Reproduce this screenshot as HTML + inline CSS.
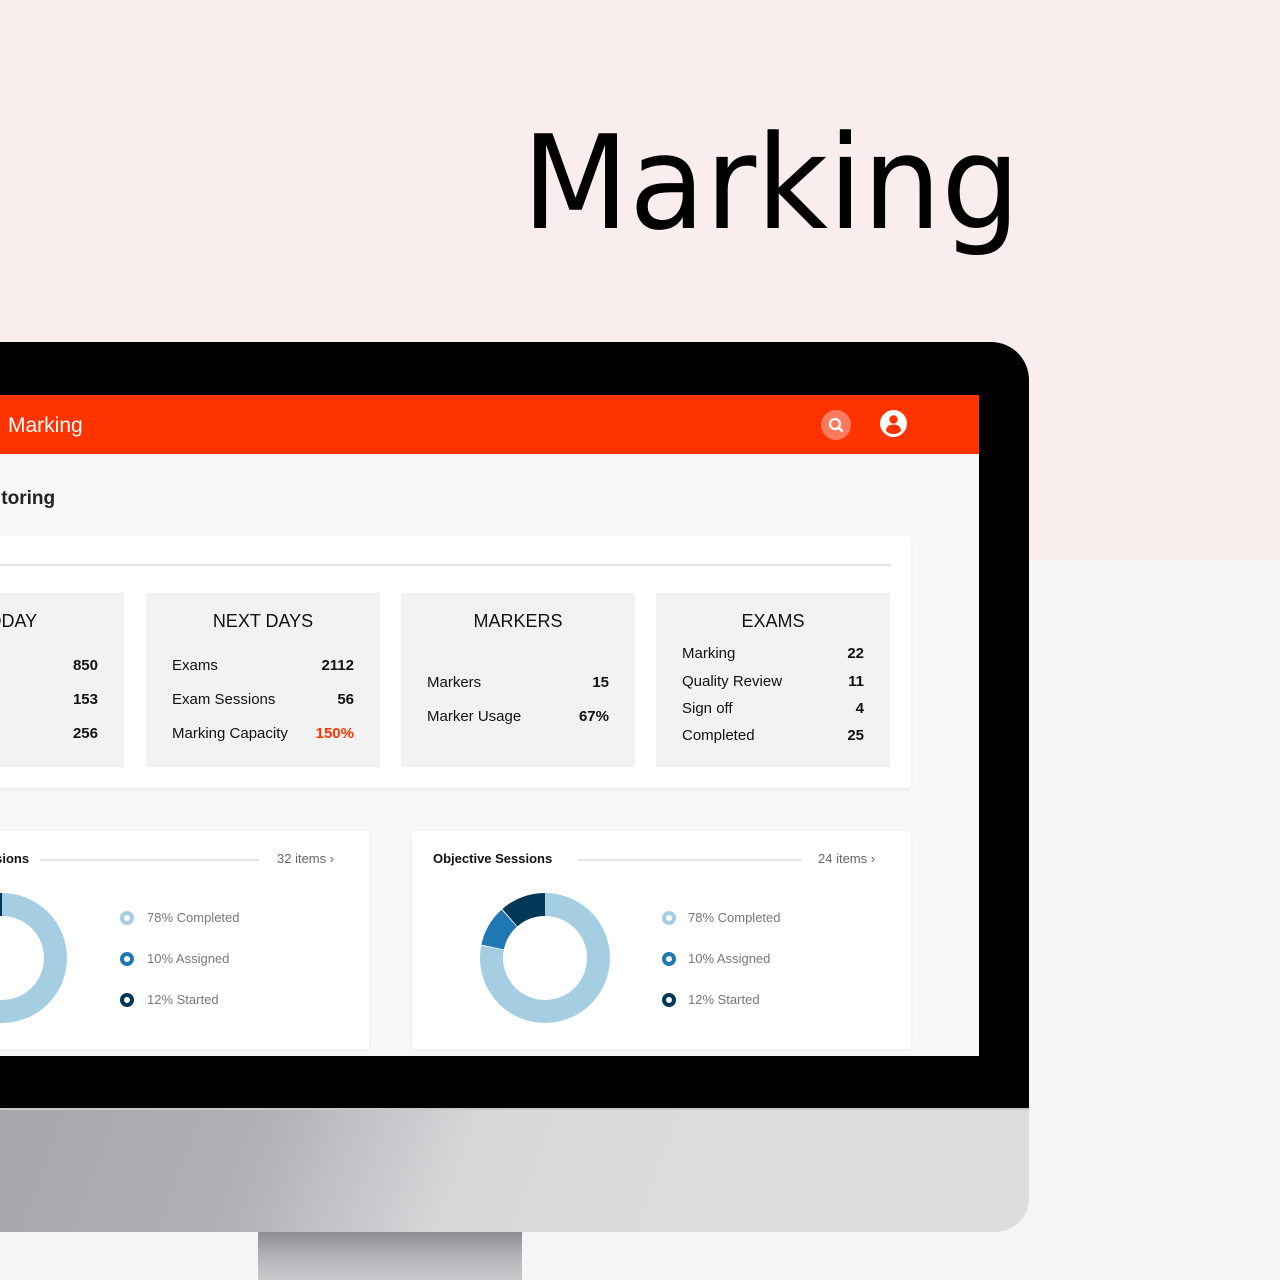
<!DOCTYPE html>
<html><head><meta charset="utf-8"><style>
*{margin:0;padding:0;box-sizing:border-box}
body{width:1280px;height:1280px;position:relative;overflow:hidden;background:#f5f5f5;font-family:"Liberation Sans","DejaVu Sans",sans-serif}
.bgtop{position:absolute;left:0;top:0;width:1280px;height:560px;background:#f9eded}
.title{position:absolute;left:522px;top:103px;font-size:130px;line-height:160px;color:#000;font-family:"DejaVu Sans","Liberation Sans",sans-serif;font-weight:normal;transform:scaleX(0.955);transform-origin:left;white-space:nowrap}
.bezel{position:absolute;left:-40px;top:342px;width:1069px;height:766px;background:#000;border-top-right-radius:38px}
.chin{position:absolute;left:0;top:1108px;width:1029px;height:124px;border-bottom-right-radius:34px;background:linear-gradient(110deg,#a6a7aa 0%,#b0b1b4 25%,#d6d7d9 45%,#dcdddf 70%,#dcdddf 100%);border-top:2px solid #c8c8c8}
.stand{position:absolute;left:258px;top:1232px;width:264px;height:48px;background:linear-gradient(180deg,#8d8e91,#b9babd 60%,#c7c8ca)}
.screen{position:absolute;left:0;top:395px;width:979px;height:661px;background:#f7f7f7;overflow:hidden}
.hdr{position:absolute;left:0;top:0;width:979px;height:59px;background:#ff3300}
.hdr .t{position:absolute;left:8px;top:19px;color:#fff;font-size:21px}
.srch{position:absolute;left:821px;top:15px;width:30px;height:30px;border-radius:50%;background:#ff7a5c}
.user{position:absolute;left:880px;top:15px;width:27px;height:27px;border-radius:50%;background:#fff}
.sub{position:absolute;left:-4px;top:93px;font-size:19px;color:#222;font-weight:bold}
.card{position:absolute;background:#fff;box-shadow:0 1px 3px rgba(0,0,0,.06);border-radius:3px}
.box{position:absolute;top:198px;width:234px;height:174px;background:#f2f2f2;color:#111}
.box h3{position:absolute;top:18px;left:0;width:100%;text-align:center;font-weight:normal;font-size:18px}
.row{position:absolute;left:26px;right:26px;font-size:15px}
.row b{position:absolute;right:0;top:0}
.lt{font-size:13px;color:#666}
.leg{position:absolute;font-size:13px;color:#777}
.dot{position:absolute;width:14px;height:14px;border-radius:50%;border:4px solid}
</style></head><body>
<div class="bgtop"></div>
<div class="title">Marking</div>
<div class="bezel"></div>
<div class="chin"></div>
<div class="stand"></div>
<div class="screen">
  <div class="hdr"><div class="t">Marking</div>
    <div class="srch"><svg width="30" height="30" viewBox="0 0 30 30"><circle cx="14" cy="14" r="5" fill="none" stroke="#fff" stroke-width="2.2"/><path d="M17.5 17.5L21 21" stroke="#fff" stroke-width="2.5" stroke-linecap="round"/></svg></div>
    <div class="user"><svg width="27" height="27" viewBox="0 0 27 27"><circle cx="13.5" cy="9.5" r="4.2" fill="#ff3300"/><path d="M6 21c0-4.5 3.5-6.5 7.5-6.5s7.5 2 7.5 6.5c-2 2-4.5 3-7.5 3s-5.5-1-7.5-3z" fill="#ff3300"/></svg></div>
  </div>
  <div class="sub">itoring</div>
  <div class="card" style="left:-20px;top:141px;width:931px;height:252px">
    <div style="position:absolute;left:20px;right:20px;top:28px;height:2px;background:#e2e2e2"></div>
  </div>
  <div class="box" style="left:-110px"><h3>TODAY</h3>
    <div class="row" style="top:64px">Exams<b>850</b></div>
    <div class="row" style="top:98px">Sessions<b>153</b></div>
    <div class="row" style="top:132px">Sessions<b>256</b></div></div>
  <div class="box" style="left:146px"><h3>NEXT DAYS</h3>
    <div class="row" style="top:64px">Exams<b>2112</b></div>
    <div class="row" style="top:98px">Exam Sessions<b>56</b></div>
    <div class="row" style="top:132px">Marking Capacity<b style="color:#ff3300">150%</b></div></div>
  <div class="box" style="left:401px"><h3>MARKERS</h3>
    <div class="row" style="top:81px">Markers<b>15</b></div>
    <div class="row" style="top:115px">Marker Usage<b>67%</b></div></div>
  <div class="box" style="left:656px"><h3>EXAMS</h3>
    <div class="row" style="top:52px">Marking<b>22</b></div>
    <div class="row" style="top:80px">Quality Review<b>11</b></div>
    <div class="row" style="top:107px">Sign off<b>4</b></div>
    <div class="row" style="top:134px">Completed<b>25</b></div></div>

  <div class="card" style="left:-200px;top:436px;width:569px;height:218px">
    <div style="position:absolute;left:172px;top:20px;font-size:13px;font-weight:bold;color:#111">Sessions</div>
    <div style="position:absolute;left:240px;right:110px;top:28px;height:2px;background:#e4e4e4"></div>
    <div class="lt" style="position:absolute;left:477px;top:20px">32 items ›</div>
    <div class="dot" style="left:320px;top:80px;border-color:#a6cee3"></div><div class="leg" style="left:347px;top:79px">78% Completed</div>
    <div class="dot" style="left:320px;top:121px;border-color:#1f78b4"></div><div class="leg" style="left:347px;top:120px">10% Assigned</div>
    <div class="dot" style="left:320px;top:162px;border-color:#023858"></div><div class="leg" style="left:347px;top:161px">12% Started</div>
  </div>
  <div class="card" style="left:412px;top:436px;width:499px;height:218px">
    <div style="position:absolute;left:21px;top:20px;font-size:13px;font-weight:bold;color:#111">Objective Sessions</div>
    <div style="position:absolute;left:166px;right:110px;top:28px;height:2px;background:#e4e4e4"></div>
    <div class="lt" style="position:absolute;left:406px;top:20px">24 items ›</div>
    <div class="dot" style="left:250px;top:80px;border-color:#a6cee3"></div><div class="leg" style="left:276px;top:79px">78% Completed</div>
    <div class="dot" style="left:250px;top:121px;border-color:#1f78b4"></div><div class="leg" style="left:276px;top:120px">10% Assigned</div>
    <div class="dot" style="left:250px;top:162px;border-color:#023858"></div><div class="leg" style="left:276px;top:161px">12% Started</div>
  </div>
  <svg style="position:absolute;left:0;top:0" width="979" height="661">
    <g transform="translate(545,563) rotate(-90)" fill="none" stroke-width="23">
      <circle r="53.5" stroke="#a6cee3" stroke-dasharray="262.2 400"/>
      <circle r="53.5" stroke="#1f78b4" stroke-dasharray="0 263 33.6 400"/>
      <circle r="53.5" stroke="#023858" stroke-dasharray="0 297.5 40.5 400"/>
    </g>
    <g transform="translate(2,563) rotate(-90)" fill="none" stroke-width="23">
      <circle r="53.5" stroke="#a6cee3" stroke-dasharray="262.2 400"/>
      <circle r="53.5" stroke="#1f78b4" stroke-dasharray="0 263 33.6 400"/>
      <circle r="53.5" stroke="#023858" stroke-dasharray="0 297.5 40.5 400"/>
    </g>
  </svg>
</div>
</body></html>
